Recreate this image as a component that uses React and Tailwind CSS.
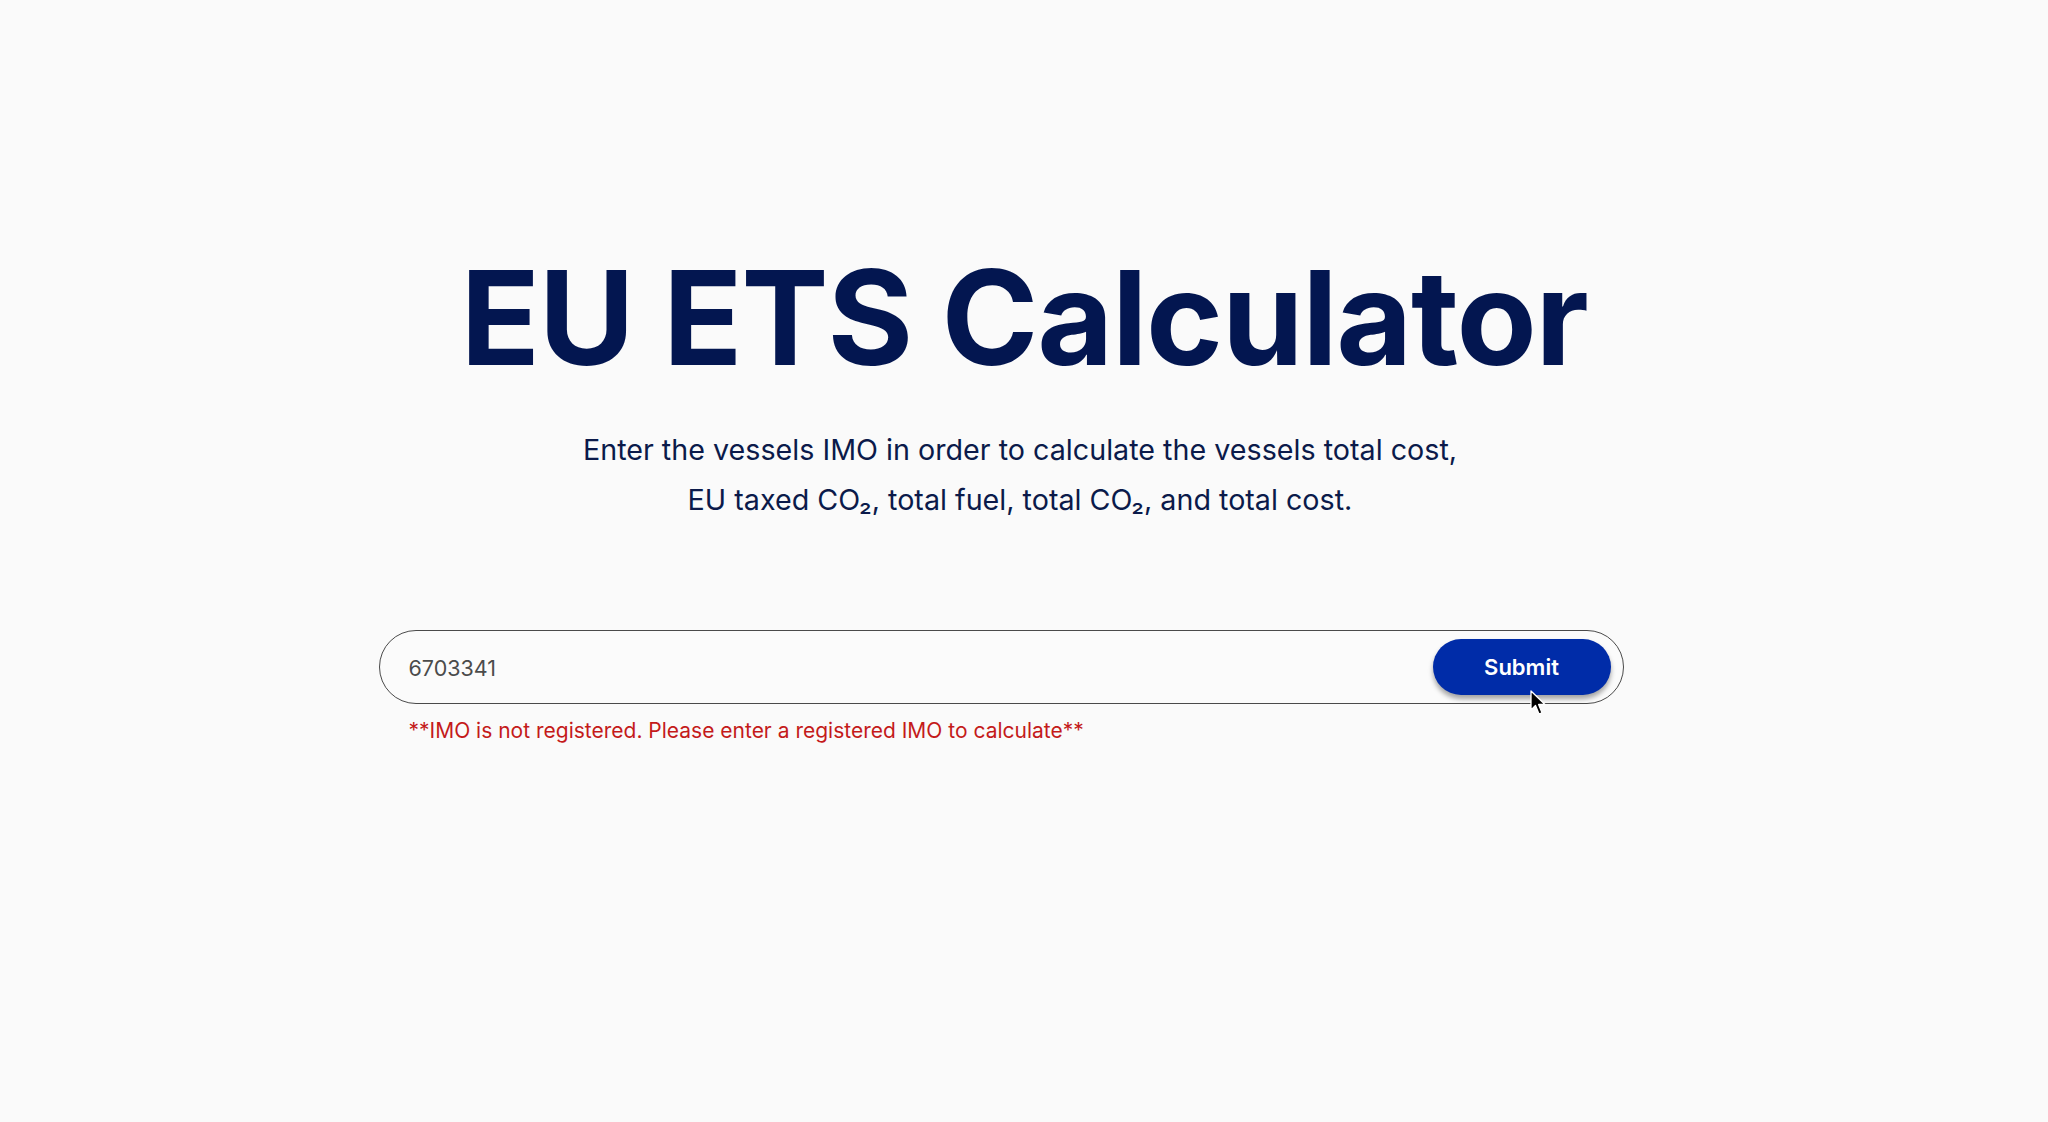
import { useState } from "react";

const font = { fontFamily: "Inter, 'Noto Sans', sans-serif" };

function Cursor() {
  return (
    <svg
      className="pointer-events-none absolute left-[1530px] top-[690px]"
      width="18"
      height="26"
      viewBox="0 0 18 26"
    >
      <path
        d="M1 1 L1 20 L5.5 15.5 L9 24 L12 22.8 L8.6 14.5 L15 14.5 Z"
        fill="#000"
        stroke="#fff"
        strokeWidth="1.3"
        strokeLinejoin="round"
      />
    </svg>
  );
}

export default function App() {
  const [imo, setImo] = useState("6703341");

  return (
    <div
      className="relative flex min-h-[1122px] w-full flex-col items-center bg-[#fafafa] pt-[252px]"
      style={font}
    >
      <h1 className="text-[131px] font-bold leading-none tracking-[-0.01em] text-[#031650]">
        EU ETS Calculator
      </h1>
      <p className="mr-[8px] mt-[42px] text-center text-[28.7px] leading-[50px] text-[#0b1a4a]">
        Enter the vessels IMO in order to calculate the vessels total cost,
        <br />
        EU taxed CO₂, total fuel, total CO₂, and total cost.
      </p>

      <form
        className="mr-[46px] mt-[105px] w-[1245px]"
        onSubmit={(e) => e.preventDefault()}
      >
        <div className="flex h-[74px] items-center rounded-full border-[1.5px] border-[#4a4a4a] bg-[#fbfbfb] pl-[29px] pr-[12px]">
          <input
            className="min-w-0 flex-1 bg-transparent pt-[3px] text-[21.5px] text-[#4b4b4b] outline-none"
            type="text"
            value={imo}
            onChange={(e) => setImo(e.target.value)}
          />
          <button
            type="submit"
            className="h-[56px] w-[178px] rounded-full bg-[#002ca8] text-[22px] font-semibold text-white shadow-[0_4px_5px_rgba(0,0,0,0.35)]"
          >
            Submit
          </button>
        </div>
        <p className="mt-[13px] pl-[30px] text-[21px] leading-[28px] text-[#c41a1a]">
          **IMO is not registered. Please enter a registered IMO to calculate**
        </p>
      </form>
      <Cursor />
    </div>
  );
}
